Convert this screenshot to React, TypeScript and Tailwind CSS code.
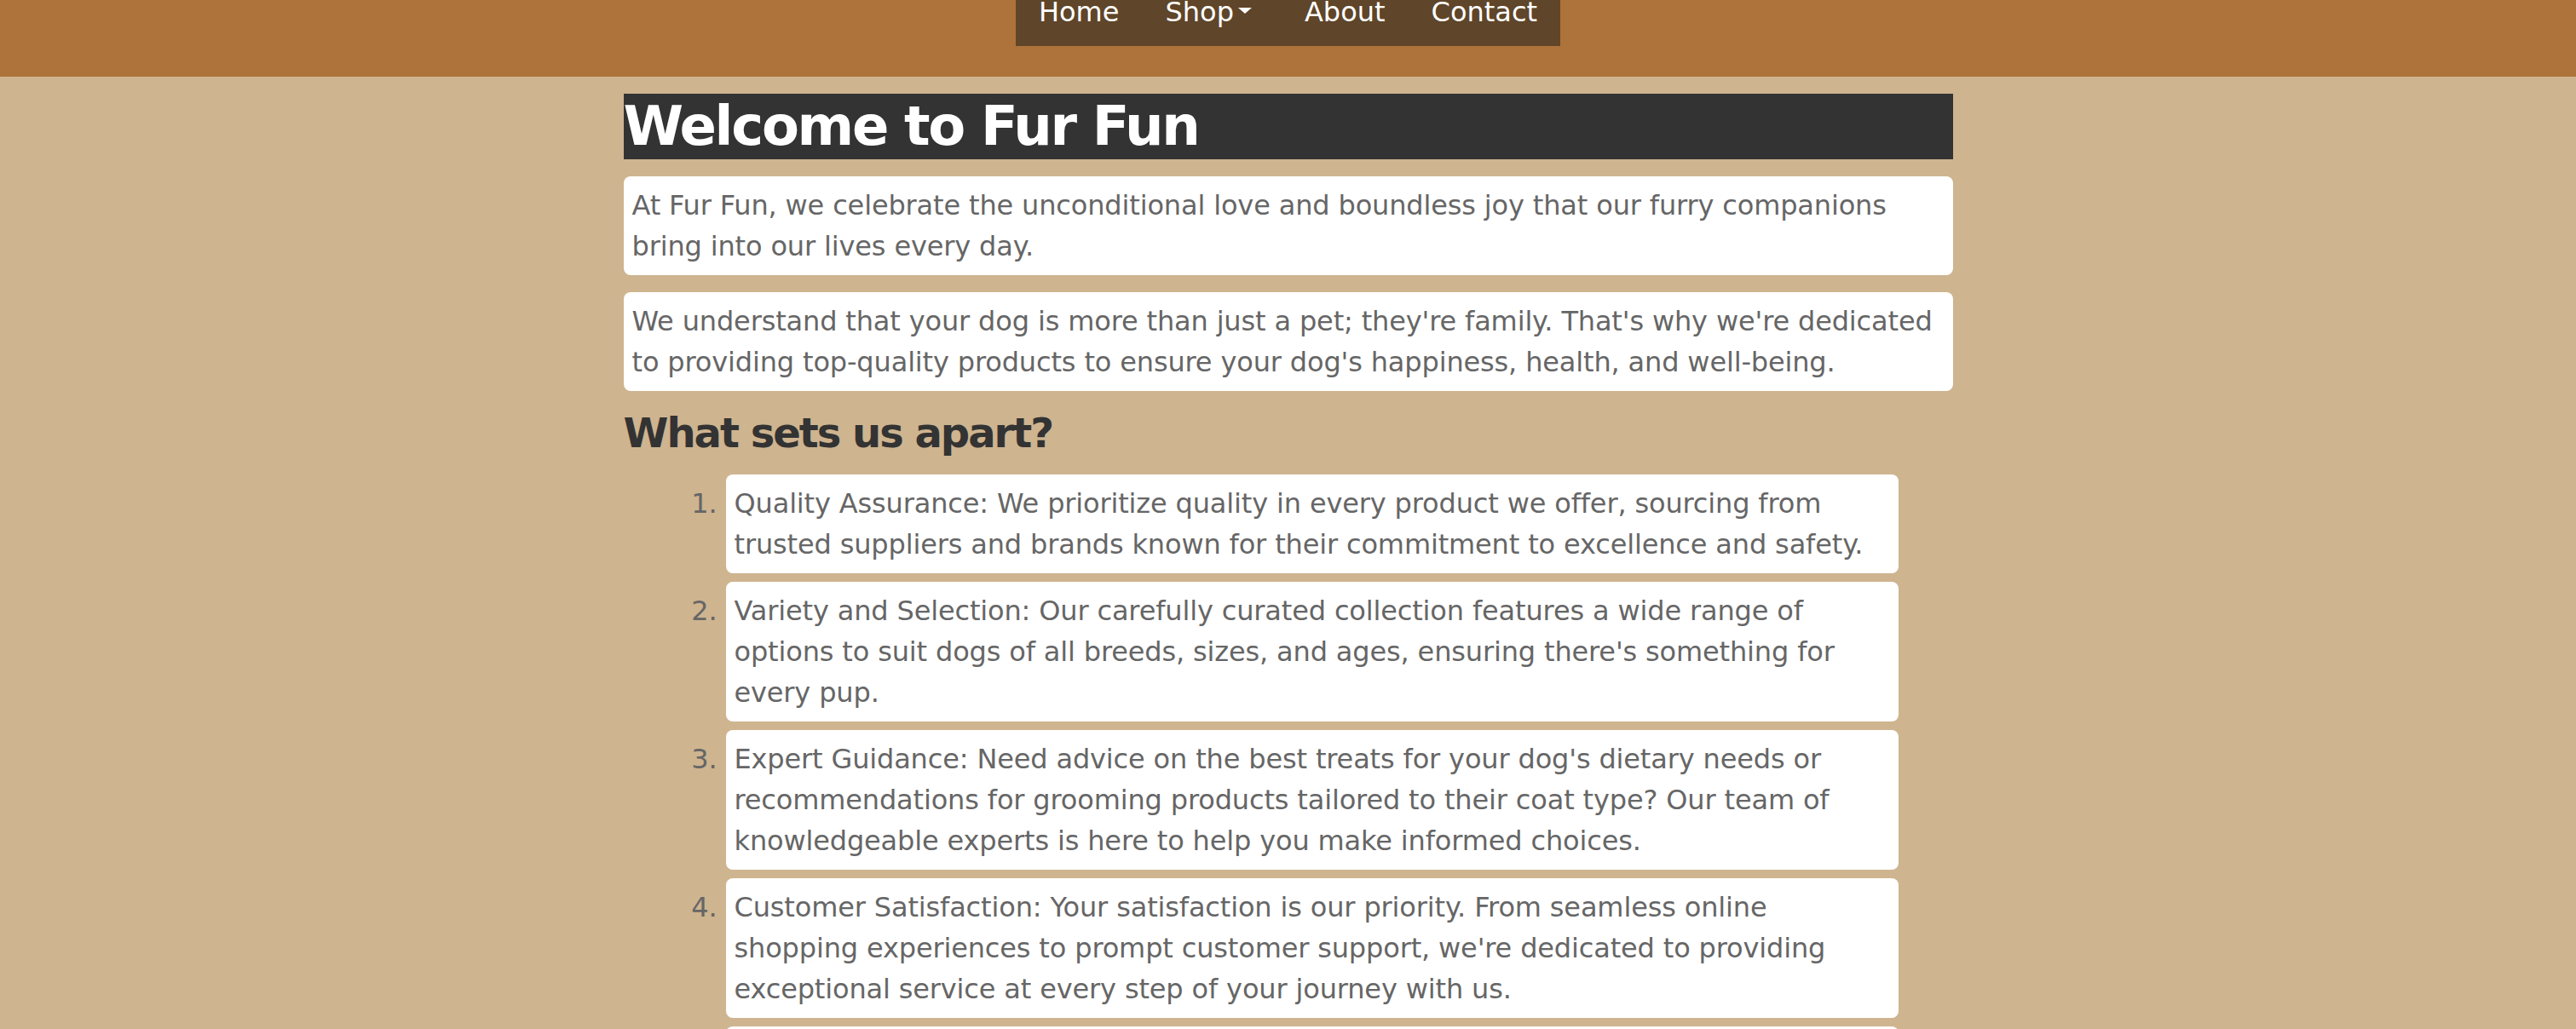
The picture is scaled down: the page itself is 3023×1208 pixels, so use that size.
import React from 'react'

const navLinks = ['Home', 'Shop', 'About', 'Contact']

const points = [
  'Quality Assurance: We prioritize quality in every product we offer, sourcing from trusted suppliers and brands known for their commitment to excellence and safety.',
  "Variety and Selection: Our carefully curated collection features a wide range of options to suit dogs of all breeds, sizes, and ages, ensuring there's something for every pup.",
  "Expert Guidance: Need advice on the best treats for your dog's dietary needs or recommendations for grooming products tailored to their coat type? Our team of knowledgeable experts is here to help you make informed choices.",
  "Customer Satisfaction: Your satisfaction is our priority. From seamless online shopping experiences to prompt customer support, we're dedicated to providing exceptional service at every step of your journey with us.",
  'Community Engagement: We love connecting with fellow dog lovers and supporting local shelters and rescue organizations.',
]

const Header: React.FC = () => (
  <header className="h-[90px] bg-[#ae733a]">
    <nav className="mx-auto flex h-[54px] w-fit overflow-hidden bg-[#5f4529]">
      <ul className="-mt-[10px] flex text-[32px] leading-[48px] text-white">
        {navLinks.map((link) => (
          <li key={link} className="flex items-start px-[27px]">
            <a href="#">{link}</a>
            {link === 'Shop' && (
              <span className="mt-[19px] ml-[5px] mr-[8px] h-0 w-0 border-x-[8px] border-t-[7px] border-x-transparent border-t-white" />
            )}
          </li>
        ))}
      </ul>
    </nav>
  </header>
)

export default function App() {
  return (
    <div className="min-h-screen bg-[#ceb48f] font-['DejaVu_Sans',sans-serif]">
      <Header />
      <main className="mx-auto w-[1560px] pt-[20px] pb-[40px]">
        <h1 className="mb-[20px] bg-[#333333] text-[64px] font-bold leading-[77px] tracking-[-2.3px] text-white">
          Welcome to Fur Fun
        </h1>
        <p className="mb-[20px] rounded-lg bg-white p-[10px] text-[32px] leading-[48px] tracking-[-0.15px] text-[#666666]">
          At Fur Fun, we celebrate the unconditional love and boundless joy that our furry companions bring into our lives every day.
        </p>
        <p className="mb-[20px] rounded-lg bg-white p-[10px] text-[32px] leading-[48px] tracking-[-0.15px] text-[#666666]">
          We understand that your dog is more than just a pet; they're family. That's why we're dedicated to providing top-quality products to ensure your dog's happiness, health, and well-being.
        </p>
        <h2 className="mb-[20px] text-[48px] font-bold leading-[58px] tracking-[-2px] text-[#333333]">
          What sets us apart?
        </h2>
        <ol className="list-decimal pl-[120px] pr-[64px] text-[32px] leading-[48px] tracking-[-0.15px] text-[#666666]">
          {points.map((point) => (
            <li key={point} className="mb-[10px] rounded-lg bg-white p-[10px]">
              {point}
            </li>
          ))}
        </ol>
      </main>
    </div>
  )
}
